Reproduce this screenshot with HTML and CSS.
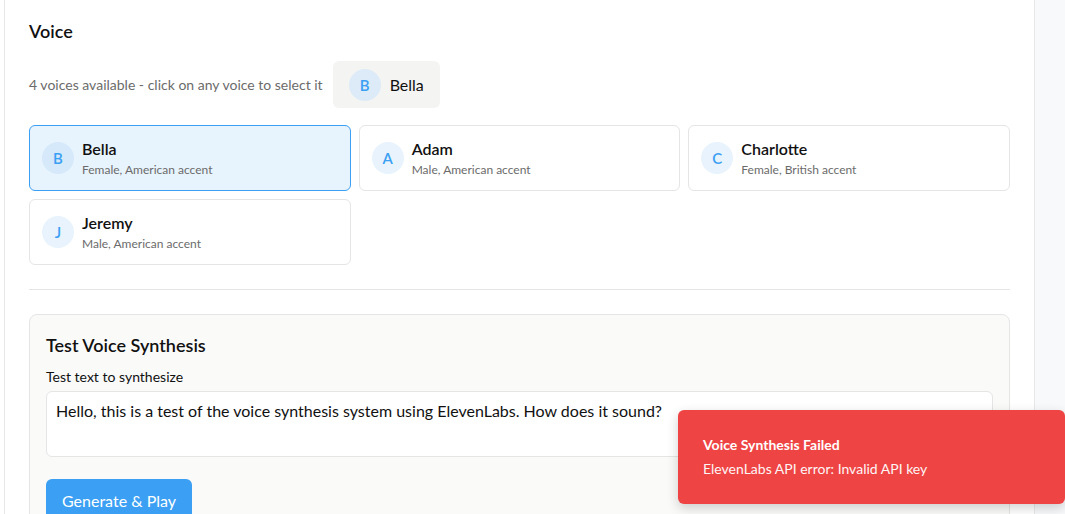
FILE: index.html
```html
<!DOCTYPE html>
<html lang="en">
<head>
<meta charset="utf-8">
<title>Voice Settings</title>
<link rel="stylesheet" href="styles.css">
</head>
<body>
<div class="app">
  <div class="main">
    <section class="panel">
      <h2 class="section-title">Voice</h2>
      <div class="voice-meta">
        <span class="meta-text">4 voices available - click on any voice to select it</span>
        <div class="current-chip">
          <span class="avatar avatar-chip">B</span>
          <span class="chip-name">Bella</span>
        </div>
      </div>
      <div class="voice-grid">
        <div class="voice-card selected">
          <span class="avatar avatar-selected">B</span>
          <div class="voice-info">
            <div class="voice-name">Bella</div>
            <div class="voice-desc">Female, American accent</div>
          </div>
        </div>
        <div class="voice-card">
          <span class="avatar">A</span>
          <div class="voice-info">
            <div class="voice-name">Adam</div>
            <div class="voice-desc">Male, American accent</div>
          </div>
        </div>
        <div class="voice-card">
          <span class="avatar">C</span>
          <div class="voice-info">
            <div class="voice-name">Charlotte</div>
            <div class="voice-desc">Female, British accent</div>
          </div>
        </div>
        <div class="voice-card">
          <span class="avatar">J</span>
          <div class="voice-info">
            <div class="voice-name">Jeremy</div>
            <div class="voice-desc">Male, American accent</div>
          </div>
        </div>
      </div>
      <hr class="divider">
      <div class="test-box">
        <h3 class="test-title">Test Voice Synthesis</h3>
        <label class="test-label" for="tt">Test text to synthesize</label>
        <textarea id="tt" class="test-input">Hello, this is a test of the voice synthesis system using ElevenLabs. How does it sound?</textarea>
        <button class="btn-primary">Generate &amp; Play</button>
      </div>
    </section>
  </div>
  <aside class="side"></aside>
</div>
<div class="toast">
  <div class="toast-title">Voice Synthesis Failed</div>
  <div class="toast-msg">ElevenLabs API error: Invalid API key</div>
</div>
</body>
</html>
```
FILE: styles.css
```css
* { box-sizing: border-box; }
html, body { margin: 0; padding: 0; height: 100%; overflow: hidden; }
body {
  font-family: Lato, "Noto Sans", sans-serif;
  color: #111;
  background: #fff;
}
.app { display: flex; height: 514px; }
.main { flex: 1; padding-left: 4px; }
.panel {
  height: 100%;
  width: 1031px;
  background: #fff;
  border-left: 1px solid #e8e8e8;
  border-right: 1px solid #e8e8e8;
  padding: 19px 24px 0 24px;
}
.side { width: 30px; background: #f8f9fb; }
.section-title {
  margin: 0;
  font-size: 18px;
  font-weight: 600;
  line-height: 24px;
  color: #111;
}
.voice-meta {
  display: flex;
  align-items: center;
  gap: 10px;
  margin-top: 18px;
}
.meta-text { font-size: 14px; color: #6b6b6b; }
.current-chip {
  display: flex;
  align-items: center;
  gap: 9px;
  height: 47px;
  padding: 0 16px;
  background: #f4f4f3;
  border-radius: 6px;
}
.chip-name { font-size: 16px; color: #111; }
.avatar {
  width: 32px;
  height: 32px;
  border-radius: 50%;
  display: flex;
  align-items: center;
  justify-content: center;
  background: #e8f3fd;
  color: #3b9ff3;
  font-size: 15px;
  font-weight: 600;
  flex-shrink: 0;
}
.avatar-chip { background: #dcebf7; }
.avatar-selected { background: #d5e9fa; }
.voice-grid {
  display: grid;
  grid-template-columns: repeat(3, 1fr);
  gap: 8px;
  margin-top: 17px;
}
.voice-card {
  display: flex;
  align-items: center;
  gap: 8px;
  height: 66px;
  padding: 0 12px;
  border: 1px solid #e5e5e5;
  border-radius: 6px;
  background: #fff;
}
.voice-card.selected {
  background: #e8f4fd;
  border-color: #3b9ff3;
}
.voice-info { display: flex; flex-direction: column; margin-top: 0; }
.voice-name { font-size: 16px; font-weight: 600; line-height: 20px; color: #111; }
.voice-desc { font-size: 12px; line-height: 16px; color: #6b6b6b; margin-top: 3px; }
.divider {
  border: 0;
  border-top: 1px solid #e5e5e5;
  margin: 24px 0 24px 0;
}
.test-box {
  background: #fafaf9;
  border: 1px solid #e5e5e5;
  border-radius: 8px;
  padding: 17px 16px 0 16px;
  height: 220px;
}
.test-title {
  margin: 0;
  font-size: 18px;
  font-weight: 600;
  line-height: 26px;
  color: #111;
}
.test-label {
  display: block;
  font-size: 14px;
  line-height: 20px;
  margin-top: 9px;
  color: #111;
}
.test-input {
  display: block;
  width: 100%;
  height: 66px;
  margin-top: 4px;
  padding: 8px 9px;
  border: 1px solid #e5e5e5;
  border-radius: 6px;
  background: #fff;
  font-family: inherit;
  font-size: 16px;
  line-height: 22px;
  color: #111;
  resize: none;
}
.btn-primary {
  display: block;
  margin-top: 22px;
  height: 42px;
  padding: 0 16px;
  border: 0;
  border-radius: 6px;
  background: #3b9ff3;
  color: #fff;
  font-family: inherit;
  font-size: 16px;
}
.toast {
  position: absolute;
  left: 678px;
  top: 410px;
  width: 387px;
  height: 94px;
  background: #ef4444;
  color: #fff;
  border-radius: 6px;
  box-shadow: 0 4px 12px rgba(0,0,0,0.18);
  padding: 25px 25px 0 25px;
}
.toast-title { font-size: 14px; font-weight: 700; line-height: 20px; }
.toast-msg { font-size: 14px; line-height: 20px; margin-top: 4px; opacity: 0.95; }
```
